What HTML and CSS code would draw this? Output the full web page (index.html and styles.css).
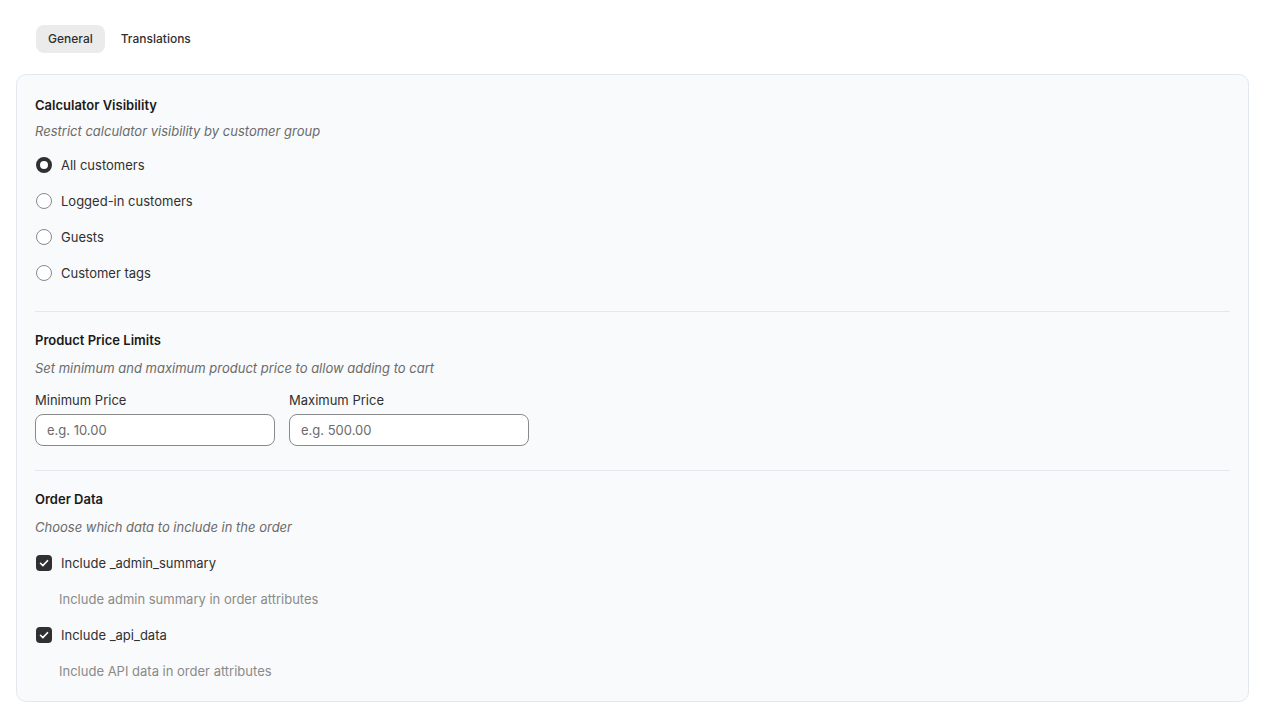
FILE: index.html
```html
<!DOCTYPE html>
<html lang="en">
<head>
  <meta charset="UTF-8">
  <meta name="viewport" content="width=device-width, initial-scale=1.0">
  <title>Calculator Settings</title>
  <link rel="stylesheet" href="styles.css">
</head>
<body>
  <div class="settings">
    <nav class="tabs">
      <button class="tab active">General</button>
      <button class="tab">Translations</button>
    </nav>

    <div class="card">
      <section class="section">
        <h3 class="section-title">Calculator Visibility</h3>
        <p class="section-desc">Restrict calculator visibility by customer group</p>
        <div class="options">
          <label class="option"><span class="radio checked"></span>All customers</label>
          <label class="option"><span class="radio"></span>Logged-in customers</label>
          <label class="option"><span class="radio"></span>Guests</label>
          <label class="option"><span class="radio"></span>Customer tags</label>
        </div>
      </section>

      <section class="section">
        <h3 class="section-title">Product Price Limits</h3>
        <p class="section-desc">Set minimum and maximum product price to allow adding to cart</p>
        <div class="fields">
          <div class="field">
            <label class="field-label">Minimum Price</label>
            <input class="input" type="text" placeholder="e.g. 10.00">
          </div>
          <div class="field">
            <label class="field-label">Maximum Price</label>
            <input class="input" type="text" placeholder="e.g. 500.00">
          </div>
        </div>
      </section>

      <section class="section">
        <h3 class="section-title">Order Data</h3>
        <p class="section-desc">Choose which data to include in the order</p>
        <div class="options">
          <label class="option">
            <span class="checkbox">
              <svg viewBox="0 0 16 16" width="14" height="14"><path d="M4 8.3l2.7 2.7 5.3-5.6" fill="none" stroke="#fff" stroke-width="1.9" stroke-linecap="round" stroke-linejoin="round"/></svg>
            </span>Include _admin_summary
          </label>
          <p class="option-help">Include admin summary in order attributes</p>
          <label class="option">
            <span class="checkbox">
              <svg viewBox="0 0 16 16" width="14" height="14"><path d="M4 8.3l2.7 2.7 5.3-5.6" fill="none" stroke="#fff" stroke-width="1.9" stroke-linecap="round" stroke-linejoin="round"/></svg>
            </span>Include _api_data
          </label>
          <p class="option-help">Include API data in order attributes</p>
        </div>
      </section>
    </div>
  </div>
</body>
</html>
```

FILE: styles.css
```css
:root {
  --text: #303030;
  --muted: #6b6b6b;
  --subtle: #8a8a8a;
  --border: #e3e8ef;
  --card: #f9fafb;
  --control: #303030;
}

* {
  margin: 0;
  padding: 0;
  box-sizing: border-box;
}

body {
  font-family: 'Inter', 'Liberation Sans', sans-serif;
  font-size: 13px;
  line-height: 20px;
  color: var(--text);
  background: #ffffff;
}

.settings {
  padding: 25px 16px 16px;
}

.tabs {
  display: flex;
  gap: 4px;
  padding-left: 20px;
  margin-bottom: 21px;
}

.tab {
  border: none;
  background: transparent;
  font: inherit;
  font-size: 12px;
  font-weight: 500;
  color: var(--text);
  height: 28px;
  padding: 0 12px;
  border-radius: 8px;
  cursor: pointer;
}

.tab.active {
  background: #ebebeb;
}

.card {
  background: var(--card);
  border: 1px solid var(--border);
  border-radius: 10px;
  padding: 0 18px;
}

.section {
  padding: 18px 0 19px;
}

.section:first-child {
  padding: 20px 0;
}

.section:last-child {
  padding-bottom: 12px;
}

.section + .section {
  border-top: 1px solid var(--border);
}

.section-title {
  font-size: 13px;
  font-weight: 600;
  color: #1a1a1a;
}

.section-desc {
  font-size: 13px;
  font-style: italic;
  color: var(--muted);
  margin-top: 8px;
}

.section:first-child .section-desc {
  margin-top: 6px;
}

.options {
  margin-top: 8px;
}

.section:first-child .options {
  margin-top: 6px;
}

.option {
  display: flex;
  align-items: center;
  gap: 9px;
  height: 36px;
}

.radio {
  width: 16px;
  height: 16px;
  border-radius: 50%;
  border: 1px solid #8a8a8a;
  background: #fff;
  margin-left: 1px;
  flex: none;
}

.radio.checked {
  border: 4.5px solid var(--control);
}

.checkbox {
  width: 16px;
  height: 16px;
  border-radius: 4px;
  background: var(--control);
  display: flex;
  align-items: center;
  justify-content: center;
  margin-left: 1px;
  flex: none;
}

.option-help {
  height: 36px;
  line-height: 36px;
  padding-left: 24px;
  color: var(--subtle);
}

.fields {
  display: flex;
  gap: 14px;
  margin: 12px 0 5px;
}

.field {
  display: flex;
  flex-direction: column;
  gap: 4px;
  width: 240px;
}

.input {
  height: 32px;
  border: 1px solid #8a8a8a;
  border-radius: 8px;
  background: #fff;
  padding: 0 11px;
  font: inherit;
  font-size: 13px;
  color: var(--text);
}

.input::placeholder {
  color: #6b6b6b;
}
```
